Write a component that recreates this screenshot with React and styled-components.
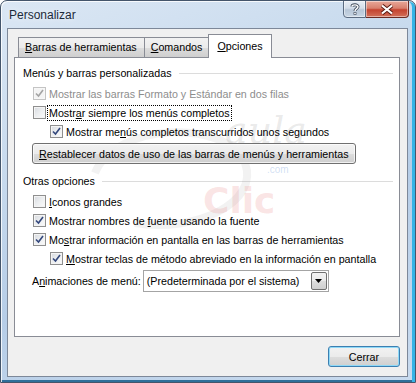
import React from 'react';
import styled, { createGlobalStyle } from 'styled-components';

const GlobalStyle = createGlobalStyle`
  html, body {
    margin: 0;
    padding: 0;
    background: #ffffff;
  }
  body {
    font-family: "Liberation Sans", Arial, sans-serif;
    font-size: 10.7px;
    color: #000000;
  }
`;

const Window = styled.div`
  position: relative;
  width: 416px;
  height: 383px;
  box-sizing: border-box;
  display: flex;
  flex-direction: column;
  border: 1px solid #44556b;
  border-radius: 7px 7px 0 0;
  background: linear-gradient(160deg, #dbe7f4 0%, #c6d9ed 35%, #b6cde7 60%, #c9dbef 100%);
  box-shadow: inset 1px 1px 0 rgba(255, 255, 255, 0.8), inset -3px 0 0 #35b4e6, inset 0 -2px 0 #2f6f9a;
  overflow: hidden;
`;

const TitleBar = styled.div`
  height: 27px;
  display: flex;
  align-items: flex-start;
  flex: none;
`;

const Title = styled.div`
  padding: 7px 0 0 8px;
  font-size: 12px;
  color: #1c2a3a;
  text-shadow: 0 0 6px rgba(255, 255, 255, 0.9);
`;

const CaptionButtons = styled.div`
  display: flex;
  margin-left: auto;
  margin-right: 6px;
  margin-top: -1px;
`;

const CaptionButton = styled.div`
  width: ${(p) => (p.close ? 43 : 23)}px;
  height: 18px;
  box-sizing: border-box;
  display: flex;
  align-items: center;
  justify-content: center;
  border: 1px solid ${(p) => (p.close ? '#6b2a22' : '#5b6b80')};
  border-left: ${(p) => (p.close ? 'none' : '1px solid #5b6b80')};
  border-radius: ${(p) => (p.close ? '0 0 4px 0' : '0 0 0 4px')};
  background: ${(p) =>
    p.close
      ? 'linear-gradient(#e8a899 0%, #d8806e 45%, #c4432f 55%, #d2705a 100%)'
      : 'linear-gradient(#e8eef5 0%, #d3dde9 45%, #b7c6d7 55%, #c9d6e4 100%)'};
  box-shadow: inset 0 0 0 1px rgba(255, 255, 255, 0.45);
`;

const Client = styled.div`
  flex: 1;
  margin: 0 7px 5px 6px;
  border: 1px solid #7d8899;
  background: #f0f0f0;
  padding: 5px 7px 0 6px;
  display: flex;
  flex-direction: column;
`;

const TabStrip = styled.div`
  display: flex;
  align-items: flex-end;
  height: 24px;
  padding-left: 4px;
  margin-bottom: -1px;
  position: relative;
  z-index: 1;
`;

const Tab = styled.div`
  box-sizing: border-box;
  height: ${(p) => (p.active ? 24 : 21)}px;
  padding: ${(p) => (p.active ? '5px 8px 0 8px' : '3px 7px 0 6px')};
  border: 1px solid #898c95;
  border-bottom: ${(p) => (p.active ? 'none' : '1px solid #898c95')};
  margin-left: ${(p) => (p.first ? '0' : p.active ? '-2px' : '-1px')};
  margin-right: ${(p) => (p.active ? '-2px' : '0')};
  background: ${(p) => (p.active ? '#ffffff' : 'linear-gradient(#f2f2f2 0%, #ebebeb 50%, #dddddd 51%, #cfcfcf 100%)')};
  position: relative;
  z-index: ${(p) => (p.active ? 2 : 1)};
  white-space: nowrap;
`;

const Panel = styled.div`
  position: relative;
  height: 280px;
  box-sizing: border-box;
  border: 1px solid #898c95;
  background: #ffffff;
  padding: 7px 6px 0 8px;
  display: flex;
  flex-direction: column;
`;

const SectionHeader = styled.div`
  display: flex;
  align-items: center;
  height: 16px;
  margin-top: ${(p) => p.top || 0}px;
  white-space: nowrap;

  &::after {
    content: '';
    flex: 1;
    height: 1px;
    margin-left: 7px;
    background: #dcdcdc;
  }
`;

const Row = styled.div`
  display: flex;
  align-items: center;
  height: 19px;
  padding-left: ${(p) => (p.indent ? 27 : 10)}px;
  margin-top: ${(p) => p.top || 0}px;
  color: ${(p) => (p.disabled ? '#8d8d8d' : '#000000')};
  white-space: nowrap;
  position: relative;
  z-index: 1;
`;

const Box = styled.span`
  width: 13px;
  height: 13px;
  box-sizing: border-box;
  flex: none;
  margin-right: 3px;
  border: 1px solid ${(p) => (p.disabled ? '#c4c4c4' : '#8f8f8f')};
  background: ${(p) =>
    p.disabled ? '#f4f4f4' : 'linear-gradient(135deg, #d6d9de 0%, #eceef0 50%, #fbfbfb 100%)'};
  box-shadow: inset 0 0 0 1px ${(p) => (p.disabled ? '#f7f7f7' : '#f4f4f4')};
  display: flex;
  align-items: center;
  justify-content: center;
`;

const Label = styled.span`
  padding: 1px;
  border: 1px ${(p) => (p.focused ? 'dotted #000000' : 'solid transparent')};
  margin-left: -2px;
`;

const Key = styled.span`
  text-decoration: underline;
`;

const PushButton = styled.div`
  align-self: flex-start;
  height: 21px;
  box-sizing: border-box;
  margin-left: 9px;
  margin-top: ${(p) => p.top || 0}px;
  padding: 0 6px;
  display: flex;
  align-items: center;
  border: 1px solid #707070;
  border-radius: 3px;
  background: linear-gradient(#f2f2f2 0%, #ebebeb 50%, #dddddd 51%, #cfcfcf 100%);
  box-shadow: inset 0 0 0 1px rgba(255, 255, 255, 0.7);
  white-space: nowrap;
  position: relative;
  z-index: 1;
`;

const SelectRow = styled.div`
  display: flex;
  align-items: center;
  height: 22px;
  margin-top: 2px;
  padding-left: 9px;
  white-space: nowrap;
`;

const SelectLabel = styled.span`
  margin-right: 2px;
`;

const Select = styled.div`
  width: 186px;
  height: 22px;
  box-sizing: border-box;
  border: 1px solid #a4a4a4;
  display: flex;
  align-items: center;
  padding-left: 3px;
  background: #ffffff;
`;

const SelectText = styled.span`
  flex: 1;
`;

const DropButton = styled.span`
  width: 16px;
  height: 18px;
  box-sizing: border-box;
  margin-right: 1px;
  border: 1px solid #707070;
  border-radius: 2px;
  background: linear-gradient(#f2f2f2 0%, #ebebeb 50%, #dddddd 51%, #cfcfcf 100%);
  display: flex;
  align-items: center;
  justify-content: center;
`;

const Footer = styled.div`
  display: flex;
  justify-content: flex-end;
  padding-top: 9px;
`;

const DefaultButton = styled.div`
  width: 72px;
  height: 21px;
  box-sizing: border-box;
  display: flex;
  align-items: center;
  justify-content: center;
  border: 1px solid #3c7fb1;
  border-radius: 3px;
  background: linear-gradient(#f2f2f2 0%, #ebebeb 50%, #dddddd 51%, #cfcfcf 100%);
  box-shadow: inset 0 0 0 1px #8fd9f7;
`;

const Watermark = styled.svg`
  position: absolute;
  left: 60px;
  top: 45px;
  pointer-events: none;
  z-index: 0;
`;

const Check = ({ color }) => (
  <svg width="9" height="9" viewBox="0 0 9 9">
    <path d="M1 4.5 L3.5 7 L8 1" fill="none" stroke={color} strokeWidth="1.6" />
  </svg>
);

const CheckBox = ({ checked, disabled }) => (
  <Box disabled={disabled}>{checked && <Check color={disabled ? '#a3a3a3' : '#33477c'} />}</Box>
);

export default function App() {
  return (
    <>
      <GlobalStyle />
      <Window>
        <TitleBar>
          <Title>Personalizar</Title>
          <CaptionButtons>
            <CaptionButton>
              <svg width="10" height="12" viewBox="0 0 10 12">
                <path d="M2 3.5 C2 1.5 8 1 8 3.8 C8 5.6 5 5.6 5 8" fill="none" stroke="#3d4756" strokeWidth="3" />
                <path d="M2 3.5 C2 1.5 8 1 8 3.8 C8 5.6 5 5.6 5 8" fill="none" stroke="#ffffff" strokeWidth="1.4" />
                <rect x="3.6" y="9.2" width="2.8" height="2.6" fill="#3d4756" />
                <rect x="4.2" y="9.8" width="1.6" height="1.4" fill="#ffffff" />
              </svg>
            </CaptionButton>
            <CaptionButton close>
              <svg width="14" height="11" viewBox="0 0 14 11">
                <path d="M2 1.5 L12 9.5 M12 1.5 L2 9.5" stroke="#5a1c14" strokeWidth="4" />
                <path d="M2 1.5 L12 9.5 M12 1.5 L2 9.5" stroke="#ffffff" strokeWidth="2.2" />
              </svg>
            </CaptionButton>
          </CaptionButtons>
        </TitleBar>
        <Client>
          <TabStrip>
            <Tab first>
              <Key>B</Key>arras de herramientas
            </Tab>
            <Tab>
              <Key>C</Key>omandos
            </Tab>
            <Tab active>
              <Key>O</Key>pciones
            </Tab>
          </TabStrip>
          <Panel>
            <Watermark width="240" height="135" viewBox="0 0 240 135">
              <path d="M20 70 C40 20 150 15 170 60 C185 100 120 130 60 120" fill="none" stroke="rgba(150,150,150,0.12)" strokeWidth="8" />
              <text x="150" y="40" fontFamily="DejaVu Serif, serif" fontStyle="italic" fontSize="38" fill="rgba(150,150,150,0.2)">aula</text>
              <text x="192" y="70" fontFamily="Liberation Sans, sans-serif" fontSize="10" fill="rgba(120,160,220,0.35)">.com</text>
              <text x="128" y="110" fontFamily="DejaVu Sans, sans-serif" fontWeight="bold" fontSize="36" fill="rgba(230,120,120,0.2)">Clic</text>
            </Watermark>
            <SectionHeader>Menús y barras personalizadas</SectionHeader>
            <Row disabled top={3}>
              <CheckBox checked disabled />
              <Label>Mostrar las barras Formato y Estándar en dos filas</Label>
            </Row>
            <Row>
              <CheckBox />
              <Label focused>
                Mostr<Key>a</Key>r siempre los menús completos
              </Label>
            </Row>
            <Row indent>
              <CheckBox checked />
              <Label>
                Mostrar me<Key>n</Key>ús completos transcurridos unos segundos
              </Label>
            </Row>
            <PushButton top={2}>
              <span>
                <Key>R</Key>establecer datos de uso de las barras de menús y herramientas
              </span>
            </PushButton>
            <SectionHeader top={9}>Otras opciones</SectionHeader>
            <Row top={3}>
              <CheckBox />
              <Label>
                <Key>I</Key>conos grandes
              </Label>
            </Row>
            <Row>
              <CheckBox checked />
              <Label>
                Mostrar nombres de <Key>f</Key>uente usando la fuente
              </Label>
            </Row>
            <Row>
              <CheckBox checked />
              <Label>
                Mo<Key>s</Key>trar información en pantalla en las barras de herramientas
              </Label>
            </Row>
            <Row indent>
              <CheckBox checked />
              <Label>
                <Key>M</Key>ostrar teclas de método abreviado en la información en pantalla
              </Label>
            </Row>
            <SelectRow>
              <SelectLabel>
                A<Key>n</Key>imaciones de menú:
              </SelectLabel>
              <Select>
                <SelectText>(Predeterminada por el sistema)</SelectText>
                <DropButton>
                  <svg width="7" height="4" viewBox="0 0 7 4">
                    <path d="M0 0 H7 L3.5 4 Z" fill="#000000" />
                  </svg>
                </DropButton>
              </Select>
            </SelectRow>
          </Panel>
          <Footer>
            <DefaultButton>Cerrar</DefaultButton>
          </Footer>
        </Client>
      </Window>
    </>
  );
}
